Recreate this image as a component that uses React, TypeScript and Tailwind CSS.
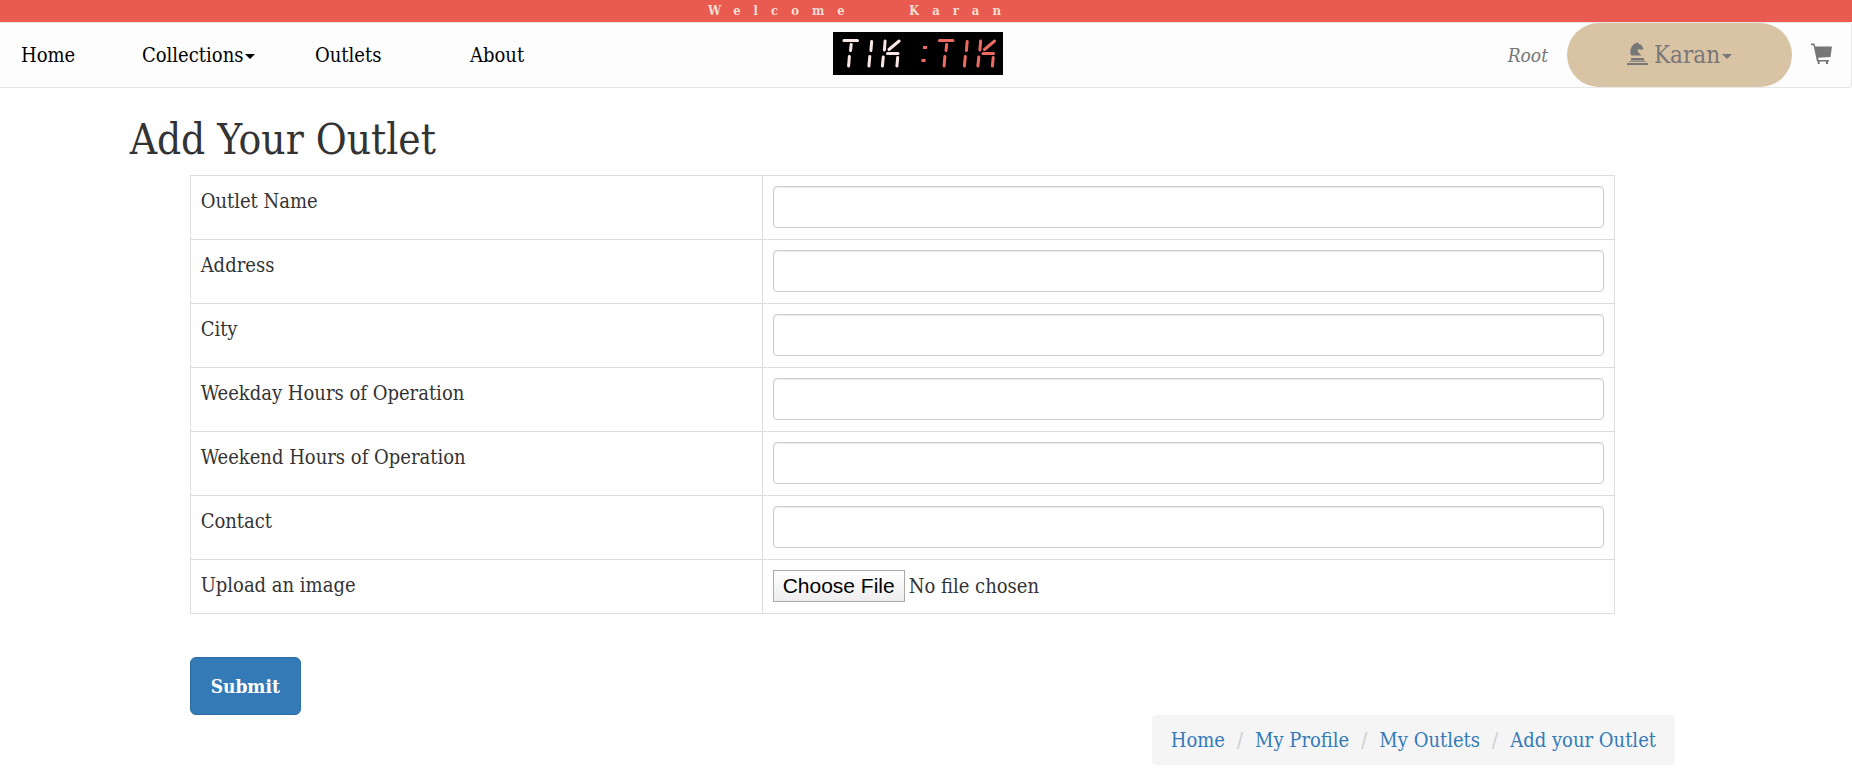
import React from "react";

const fields = [
  { id: "name", label: "Outlet Name" },
  { id: "address", label: "Address" },
  { id: "city", label: "City" },
  { id: "weekday", label: "Weekday Hours of Operation" },
  { id: "weekend", label: "Weekend Hours of Operation" },
  { id: "contact", label: "Contact" },
];

const crumbs = ["Home", "My Profile", "My Outlets", "Add your Outlet"];

function Caret() {
  return (
    <svg className="ml-0.5 inline-block h-[5px] w-[10px] align-middle" viewBox="0 0 10 5" fill="currentColor" aria-hidden="true">
      <path d="M0 0h10L5 5z" />
    </svg>
  );
}

function LedTik() {
  return (
    <g strokeWidth="3" strokeLinecap="round">
      <path d="M2.400 1.500h13.600M9.700 5.500l-.7 6M7.900 17.500l-.8 9.500M30.200 2.500l-.8 9M28.300 17.500l-.9 9.500M43.600 2l-.7 9M41.800 18l-.9 9M57.600 2L47.500 10.500M46 14.500h10.500M56.200 18.500l-.8 8.500" />
    </g>
  );
}

function Logo() {
  return (
    <svg className="mt-[9px] h-[43px] w-[170px] self-start" viewBox="0 0 170 43" fill="none" role="img" aria-label="TIK :TIK">
      <path fill="#000" d="M0 0h170v43H0z" />
      <g transform="translate(8.500 7)" stroke="#fae6e2"><LedTik /></g>
      <g transform="translate(104 7)" stroke="#ec6a60"><LedTik /></g>
      <path fill="#ec6a60" d="M90 14h4v3h-4zM88.500 27h4v3h-4z" />
    </svg>
  );
}

function Knight() {
  return (
    <svg className="mb-1 mr-1.5 h-[23px] w-[21px]" viewBox="0 0 21 23" fill="currentColor" aria-hidden="true">
      <path d="M10 0l1.300 1.500 3 1.500 1.900 3v1.300l-1.400.4-3-.4-1.300 1 .6 1.700 3.400 3.500H4.300C2.800 11 3 7.300 4.800 4.500 6 2.700 7.500 1.500 9.200 1.300zM4 16h13v2.500H4zM2 19.300h17v.8H2zM0 21h21v2H0z" />
    </svg>
  );
}

function Cart() {
  return (
    <svg className="mb-0.5 h-[22px] w-[22px]" viewBox="0 0 22 22" fill="currentColor" aria-hidden="true">
      <path d="M0 .5h3.500L4.300 3.500H21l-1.500 10.500-12.300.7.4 2.300H18v1.500h-1v2.500h-2v-2.500H8.700V21h-2v-2.500H6L2.500 2.200H0z" />
    </svg>
  );
}

export default function App() {
  return (
    <div className="bg-white font-['DejaVu_Serif_Condensed','DejaVu_Serif',serif] text-[20px] leading-[26px] text-[#333]">
      <div className="h-[22px] whitespace-pre bg-[#e95a50] pr-[130px] text-center text-[13px] font-bold leading-[22px] tracking-[13px] text-[#f5ded3]">
        {"Welcome   Karan"}
      </div>
      <nav className="grid h-[66px] grid-cols-[45%_170px_1fr] items-center rounded-r border border-l-0 border-[#e7e7e7] bg-[#fdfdfd]">
        <div className="grid grid-cols-[121px_173px_155px_auto] pl-[21px] text-black">
          <a href="#home">Home</a>
          <a href="#collections">Collections<Caret /></a>
          <a href="#outlets">Outlets</a>
          <a href="#about">About</a>
        </div>
        <Logo />
        <div className="flex h-16 items-center justify-end pr-[18px] text-[#777]">
          <a href="#root" className="text-[19px] italic">Root</a>
          <a href="#profile" className="mx-[19px] flex h-16 w-[225px] items-center justify-center rounded-[32px] bg-[#d9c3a5] text-[24px]">
            <Knight />
            <span>Karan<Caret /></span>
          </a>
          <a href="#cart" aria-label="Cart"><Cart /></a>
        </div>
      </nav>
      <main className="ml-[7%] mr-[177px] pt-[26px]">
        <h1 className="text-[42px] leading-[52px]">Add Your Outlet</h1>
        <form className="mx-[60px] mt-[9px]">
          <table className="w-full table-fixed border-collapse border border-[#ddd]">
            <tbody>
              {fields.map((f) => (
                <tr key={f.id} className="h-16">
                  <td className="w-[572px] border border-[#ddd] px-[10px] pt-3 align-top">
                    <label htmlFor={f.id}>{f.label}</label>
                  </td>
                  <td className="border border-[#ddd] px-[10px] pt-[10px] align-top">
                    <input id={f.id} type="text" className="block h-[42px] w-full rounded border border-[#ccc] bg-white px-3 shadow-[inset_0_1px_1px_rgba(0,0,0,0.075)]" />
                  </td>
                </tr>
              ))}
              <tr className="h-[54px]">
                <td className="border border-[#ddd] px-[10px] pt-3 align-top">
                  <label htmlFor="image">Upload an image</label>
                </td>
                <td className="border border-[#ddd] px-[10px] pt-[10px] align-top">
                  <input
                    id="image"
                    type="file"
                    className="block h-8 w-full leading-8 file:mr-1 file:h-8 file:rounded-none file:border file:border-solid file:border-[#a9a9a9] file:bg-linear-to-b file:from-white file:to-[#eee] file:px-[9px] file:font-['Liberation_Sans',sans-serif] file:text-[21px] file:leading-[28px] file:text-black"
                  />
                </td>
              </tr>
            </tbody>
          </table>
          <button type="submit" className="mt-[43px] block h-[58px] rounded-md border border-[#2e6da4] bg-[#337ab7] px-5 text-[19px] font-bold text-white">
            Submit
          </button>
        </form>
        <ol className="ml-auto flex h-[50px] w-fit items-center rounded bg-[#f5f5f5] px-[19px]">
          {crumbs.map((c, i) => (
            <li key={c}>
              {i > 0 && <span className="px-3 text-[#ccc]">/</span>}
              <a href="#crumb" className="text-[#337ab7]">{c}</a>
            </li>
          ))}
        </ol>
      </main>
    </div>
  );
}
